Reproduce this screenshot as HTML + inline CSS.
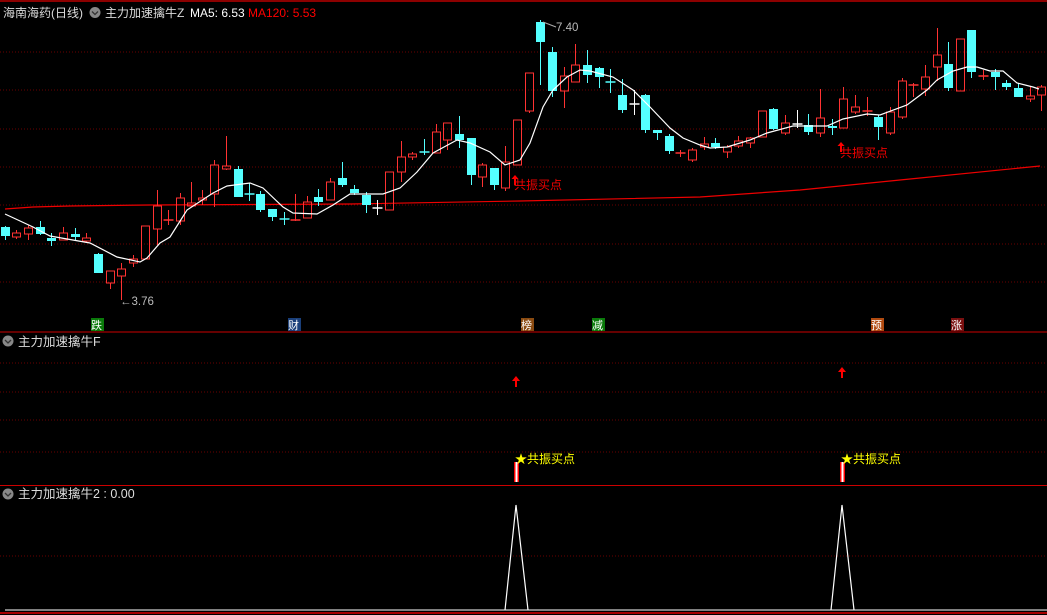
<!DOCTYPE html>
<html><head><meta charset="utf-8">
<style>
html,body{margin:0;padding:0;background:#000;width:1047px;height:615px;overflow:hidden}
svg{display:block}
text{font-family:"Liberation Sans","Noto Sans CJK SC",sans-serif}
</style></head><body>
<svg id="s" width="1047" height="615" viewBox="0 0 1047 615" xmlns="http://www.w3.org/2000/svg">
<rect width="1047" height="615" fill="#000"/>
<line x1="0" y1="1" x2="1047" y2="1" stroke="#b00" stroke-width="1.5"/>
<g stroke="#6a0000" stroke-dasharray="1,2" stroke-width="1">
<line x1="0" y1="52" x2="1047" y2="52"/><line x1="0" y1="90" x2="1047" y2="90"/>
<line x1="0" y1="129" x2="1047" y2="129"/><line x1="0" y1="167" x2="1047" y2="167"/>
<line x1="0" y1="205" x2="1047" y2="205"/><line x1="0" y1="244" x2="1047" y2="244"/>
<line x1="0" y1="282" x2="1047" y2="282"/>
<line x1="0" y1="363" x2="1047" y2="363"/><line x1="0" y1="392" x2="1047" y2="392"/>
<line x1="0" y1="420" x2="1047" y2="420"/><line x1="0" y1="452" x2="1047" y2="452"/>
<line x1="0" y1="556" x2="1047" y2="556"/>
</g>
<line x1="0" y1="332" x2="1047" y2="332" stroke="#c00" stroke-width="1"/>
<line x1="0" y1="485.5" x2="1047" y2="485.5" stroke="#c00" stroke-width="1"/>
<line x1="5" y1="610" x2="1047" y2="610" stroke="#fff" stroke-width="1"/>
<line x1="0" y1="613" x2="1047" y2="613" stroke="#d00" stroke-width="1.5"/>
<polyline fill="none" stroke="#e00" stroke-width="1.2" points="5,209 33,207 70,206 150,205 350,204 520,201 700,197 800,190 900,180 1040,166"/>
<g id="c"></g>
<polyline fill="none" stroke="#fff" stroke-width="1.2" points="5,214 33,227 50,236 90,243 117,257 140,262 147,258 160,243 170,237 187,210 213,193 227,186 250,183 263,188 283,207 293,213 317,214 333,205 350,194 360,194 383,194 400,188 417,172 433,153 457,140 470,143 490,152 505,165 520,160 530,143 543,107 553,90 567,77 580,70 590,71 613,77 633,90 650,107 670,128 683,138 700,145 710,148 727,147 750,140 767,133 793,126 827,126 843,119 867,114 880,115 907,105 927,90 937,80 953,71 967,67 977,67 990,71 1003,71 1017,83 1033,87 1039,89"/>
<text x="3" y="17" fill="#ddd" font-size="12">海南海药(日线)</text>
<circle cx="95" cy="12.5" r="5.5" fill="#888"/><path d="M92 11.5l3 3 3-3" stroke="#333" stroke-width="1.3" fill="none"/>
<text x="105" y="17" fill="#ddd" font-size="12">主力加速擒牛Z</text>
<text x="190" y="17" fill="#fff" font-size="12">MA5: 6.53</text>
<text x="248" y="17" fill="#f00" font-size="12">MA120: 5.53</text>
<path d="M543 22 L556 27" stroke="#aaa" stroke-width="1"/>
<text x="556" y="31" fill="#bbb" font-size="11.5">7.40</text>
<text x="120" y="305" fill="#bbb" font-size="11.5">←3.76</text>
<path d="M515 175 l-3.5 4 h2.5 v6 h2 v-6 h2.5z" fill="#f00"/>
<text x="514" y="189" fill="#e00" font-size="12">共振买点</text>
<path d="M841 142 l-3.5 4 h2.5 v6 h2 v-6 h2.5z" fill="#f00"/>
<text x="840" y="157" fill="#e00" font-size="12">共振买点</text>
<g font-size="11" fill="#fff">
<rect x="91" y="318" width="13" height="13" fill="#0a7a0a"/><text x="91" y="329">跌</text>
<rect x="288" y="318" width="13" height="13" fill="#1a3f7a"/><text x="288" y="329">财</text>
<rect x="521" y="318" width="13" height="13" fill="#8a4a10"/><text x="521" y="329">榜</text>
<rect x="592" y="318" width="13" height="13" fill="#0a7a0a"/><text x="592" y="329">减</text>
<rect x="871" y="318" width="13" height="13" fill="#b04a10"/><text x="871" y="329">预</text>
<rect x="951" y="318" width="13" height="13" fill="#7a1010"/><text x="951" y="329">涨</text>
</g>
<circle cx="8" cy="341" r="5.5" fill="#888"/><path d="M5 340l3 3 3-3" stroke="#333" stroke-width="1.3" fill="none"/>
<text x="18" y="346" fill="#ddd" font-size="12.5">主力加速擒牛F</text>
<path d="M516 376 l-4 5 h3 v6 h2 v-6 h3z" fill="#f00"/>
<path d="M842 367 l-4 5 h3 v6 h2 v-6 h3z" fill="#f00"/>
<rect x="514" y="462" width="5" height="20" fill="#f00"/><rect x="515.5" y="462" width="2" height="20" fill="#fff"/>
<rect x="840" y="462" width="5" height="20" fill="#f00"/><rect x="841.5" y="462" width="2" height="20" fill="#fff"/>
<text x="515" y="463" fill="#ff0" font-size="12">★共振买点</text>
<text x="841" y="463" fill="#ff0" font-size="12">★共振买点</text>
<circle cx="8" cy="494" r="5.5" fill="#888"/><path d="M5 493l3 3 3-3" stroke="#333" stroke-width="1.3" fill="none"/>
<text x="18" y="498" fill="#ddd" font-size="12.5">主力加速擒牛2 : 0.00</text>
<polyline fill="none" stroke="#fff" stroke-width="1.2" points="505,610 516,505 528,610"/>
<polyline fill="none" stroke="#fff" stroke-width="1.2" points="831,610 842,505 854,610"/>
</svg>
<script>
var d=[
['c',227,236,226,240],['r',233,237,230,239],['r',228,234,225,240],['c',227,234,221,235],['c',238,241,233,246],['r',233,240,227,240],['c',234,237,228,240],['r',238,241,233,243],['c',254,273,253,273],['r',271,283,271,289],
['r',269,276,263,300],['r',259,263,255,267],['r',226,259,226,259],['r',206,229,190,245],['r',220,220,210,225],['r',198,221,193,225],['r',203,206,182,206],['r',198,200,190,205],['r',165,194,160,207],['r',166,169,136,170],
['c',169,197,166,197],['c',194,194,183,201],['c',194,210,191,212],['c',209,217,209,221],['c',219,219,212,225],['r',220,221,194,221],['r',202,218,196,218],['c',197,202,189,206],['r',182,200,178,200],['c',178,185,162,187],
['c',189,193,185,195],['c',195,205,192,213],['w',208,208,200,215],['r',172,210,172,210],['r',157,172,141,182],['r',154,157,152,160],['c',152,152,139,155],['r',132,153,124,153],['r',123,140,124,150],['c',134,140,116,148],
['c',138,175,138,185],['r',165,177,163,187],['c',168,185,168,190],['r',162,188,146,191],['r',120,165,120,165],['r',73,111,73,113],['c',22,42,20,85],['c',52,91,47,97],['r',76,91,67,108],['r',65,82,44,82],
['c',65,75,50,83],['c',68,77,67,88],['c',82,82,69,93],['c',95,110,79,113],['w',104,104,90,115],['c',95,130,94,133],['c',130,133,130,140],['c',136,151,134,154],['r',153,153,150,157],['r',150,160,148,162],
['r',144,147,137,150],['c',143,147,138,149],['r',147,152,145,158],['r',141,146,136,148],['r',138,143,137,148],['r',111,137,111,137],['c',109,129,108,130],['r',123,133,115,135],['w',124,124,110,128],['c',125,132,114,135],
['r',118,133,89,137],['c',126,128,119,135],['r',99,128,87,128],['r',107,112,95,114],['r',111,111,97,116],['c',117,127,115,140],['r',112,133,107,135],['r',81,117,78,119],['r',85,85,83,97],['r',77,89,65,96],
['r',55,67,28,81],['c',64,88,42,91],['r',39,91,39,91],['c',30,72,30,78],['r',76,76,70,80],['c',72,77,69,90],['c',83,87,80,90],['c',88,97,83,97],['r',96,99,86,102],['r',87,95,85,111]];
var xs=[5,16,28,40,51,63,75,86,98,110,121,133,145,157,168,180,191,202,214,226,238,249,260,272,284,295,307,318,330,342];
for(var i=30;i<d.length;i++)xs.push(Math.round(354+(i-30)*11.65));
var g=document.getElementById('c'),h='';
for(var i=0;i<d.length;i++){var k=d[i],x=xs[i]+0.5,col=k[0]=='c'?'#54ffff':k[0]=='w'?'#fff':'#ff3232';
var t=k[1],b=k[2];
if(b-t<1.5){h+='<line x1="'+x+'" y1="'+k[3]+'" x2="'+x+'" y2="'+k[4]+'" stroke="'+col+'"/>';h+='<line x1="'+(x-5)+'" y1="'+t+'" x2="'+(x+5)+'" y2="'+t+'" stroke="'+col+'" stroke-width="1.5"/>';continue;}
if(k[3]<t)h+='<line x1="'+x+'" y1="'+k[3]+'" x2="'+x+'" y2="'+t+'" stroke="'+col+'"/>';
if(k[4]>b)h+='<line x1="'+x+'" y1="'+b+'" x2="'+x+'" y2="'+k[4]+'" stroke="'+col+'"/>';
if(k[0]=='c')h+='<rect x="'+(x-4.5)+'" y="'+t+'" width="9" height="'+(b-t)+'" fill="'+col+'"/>';
else h+='<rect x="'+(x-4)+'" y="'+t+'" width="8" height="'+(b-t)+'" fill="none" stroke="'+col+'"/>';}
g.innerHTML=h;
</script>
</body></html>
